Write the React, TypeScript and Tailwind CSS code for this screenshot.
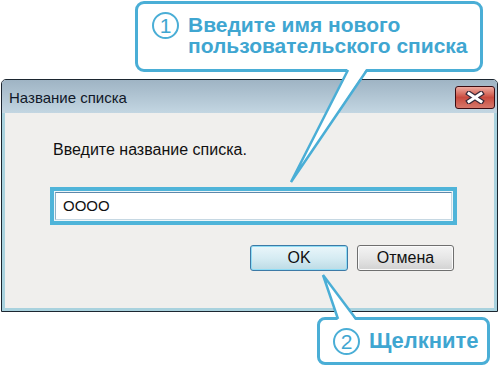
import React from "react";

export default function App() {
  const font = { fontFamily: '"Liberation Sans", Arial, sans-serif' };
  return (
    <div className="relative w-[500px] h-[368px] bg-white overflow-hidden" style={font}>
      {/* Callout 1 */}
      <div className="ml-[135px] mt-px w-[348px] h-[71px] border-[3px] border-[#4aaed6] rounded-[9px] bg-white flex items-start pl-[14px] pt-[8px] gap-[9px]">
        <div className="w-[27px] h-[27px] shrink-0 rounded-full border-2 border-[#4aaed6] flex items-center justify-center text-[#3fa6d1] text-[21px] leading-none">
          1
        </div>
        <div className="mt-[2px] text-[21px] leading-[21px] font-bold text-[#3fa6d1]">
          <div>Введите имя нового</div>
          <div>пользовательского списка</div>
        </div>
      </div>

      {/* Dialog */}
      <div className="mt-[7px] ml-px w-[497px] h-[233px] border border-[#1c2630] rounded-t-[5px] overflow-hidden flex flex-col">
        <div className="h-[33px] shrink-0 flex items-start justify-between bg-gradient-to-b from-[#9fb4c4] to-[#c3d6e2]">
          <div className="pl-[7px] pt-[9px] text-[15px] leading-[18px] text-[#101828]">Название списка</div>
          <div className="mt-[6px] mr-[2px] w-[40px] h-[23px] rounded-[3px] border border-[#3a0c12] bg-gradient-to-b from-[#eeaaa0] via-[#c84a3e] to-[#d6776b] flex items-center justify-center">
            <svg width="20" height="13" viewBox="0 0 20 13">
              <path d="M4 2.5 L16 10.5 M16 2.5 L4 10.5" stroke="#3a2a3a" strokeWidth="5.5" strokeLinecap="square" />
              <path d="M4 2.5 L16 10.5 M16 2.5 L4 10.5" stroke="#ffffff" strokeWidth="3" strokeLinecap="square" />
            </svg>
          </div>
        </div>
        <div className="flex-1 border-x-[3px] border-b-[3px] border-[#a9d2de] bg-[#f0efed] flex flex-col">
          <div className="pl-[48px] pt-[28px] text-[16px] leading-[18px] text-[#111]">Введите название списка.</div>
          <div className="ml-[45px] mt-[28px] w-[407px] h-[38px] border-[4px] border-[#4fb4d9] p-px bg-[#eef6f9]">
            <div className="h-full border border-t-[#5d88ab] border-l-[#8fb0c6] border-r-[#c6d8e3] border-b-[#c6d8e3] bg-white flex items-center pl-[7px] text-[15px] text-[#111]">
              OOOO
            </div>
          </div>
          <div className="mt-[20px] flex justify-end pr-[40px] gap-[9px]">
            <div className="w-[98px] h-[26px] rounded-[3px] border border-[#3d7aa6] shadow-[inset_0_0_0_1px_#8fdcf5] bg-gradient-to-b from-[#eaf6fa] via-[#d6ecf3] to-[#bcdbe5] flex items-center justify-center text-[16px] text-[#111]">
              OK
            </div>
            <div className="w-[97px] h-[26px] rounded-[3px] border border-[#6f6f6f] shadow-[inset_0_0_0_1px_#fbfbfb] bg-gradient-to-b from-[#f4f4f4] via-[#e6e6e6] to-[#d2d2d2] flex items-center justify-center text-[16px] text-[#111]">
              Отмена
            </div>
          </div>
        </div>
      </div>

      {/* Callout 2 */}
      <div className="ml-[317px] mt-[5px] w-[173px] h-[48px] border-[3px] border-[#4aaed6] rounded-[8px] bg-white flex items-center pl-[13px] gap-[9px]">
        <div className="w-[27px] h-[27px] shrink-0 rounded-full border-2 border-[#4aaed6] flex items-center justify-center text-[#3fa6d1] text-[21px] leading-none">
          2
        </div>
        <div className="text-[22px] leading-[24px] font-bold text-[#3fa6d1]">Щелкните</div>
      </div>

      {/* Pointers */}
      <svg className="absolute inset-0 pointer-events-none" width="500" height="368" viewBox="0 0 500 368">
        <polygon points="348,68 291,182 367,68" fill="#ffffff" />
        <path d="M348 70 L291 182 L367 70" fill="none" stroke="#4aaed6" strokeWidth="2.5" strokeLinejoin="miter" />
        <polygon points="338,321 323,275 356,321" fill="#ffffff" />
        <path d="M338 319 L323 275 L356 319" fill="none" stroke="#4aaed6" strokeWidth="2.5" strokeLinejoin="miter" />
      </svg>
    </div>
  );
}
